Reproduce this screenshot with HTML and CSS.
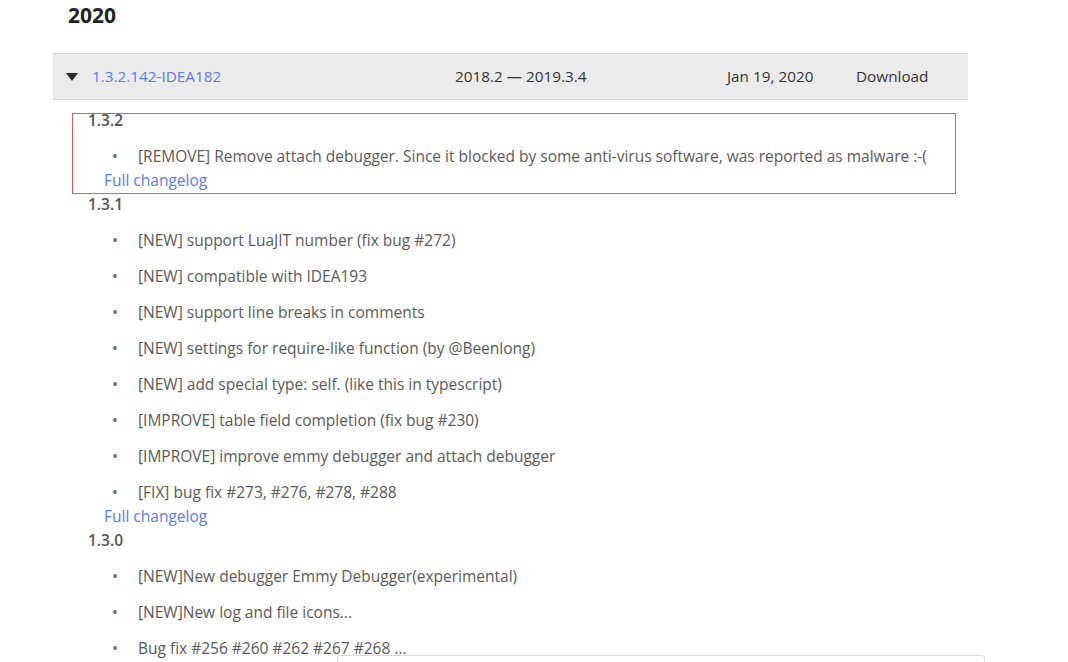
FILE: index.html
```html
<!DOCTYPE html>
<html>
<head>
<meta charset="utf-8">
<link rel="stylesheet" href="styles.css">
</head>
<body>
<div class="page">
  <h2 class="year">2020</h2>
  <div class="bar">
    <span class="caret"></span>
    <a class="ver" href="#">1.3.2.142-IDEA182</a>
    <span class="range">2018.2 — 2019.3.4</span>
    <span class="date">Jan 19, 2020</span>
    <span class="dl">Download</span>
  </div>
  <div class="notes">
    <div class="section marked">
      <div class="vh">1.3.2</div>
      <ul class="items">
        <li>[REMOVE] Remove attach debugger. Since it blocked by some anti-virus software, was reported as malware :-(</li>
      </ul>
      <a class="full" href="#">Full changelog</a>
    </div>
    <div class="section">
      <div class="vh">1.3.1</div>
      <ul class="items">
        <li>[NEW] support LuaJIT number (fix bug #272)</li>
        <li>[NEW] compatible with IDEA193</li>
        <li>[NEW] support line breaks in comments</li>
        <li>[NEW] settings for require-like function (by @Beenlong)</li>
        <li>[NEW] add special type: self. (like this in typescript)</li>
        <li>[IMPROVE] table field completion (fix bug #230)</li>
        <li>[IMPROVE] improve emmy debugger and attach debugger</li>
        <li>[FIX] bug fix #273, #276, #278, #288</li>
      </ul>
      <a class="full" href="#">Full changelog</a>
    </div>
    <div class="section">
      <div class="vh">1.3.0</div>
      <ul class="items">
        <li>[NEW]New debugger Emmy Debugger(experimental)</li>
        <li>[NEW]New log and file icons...</li>
        <li>Bug fix #256 #260 #262 #267 #268 ...</li>
      </ul>
    </div>
  </div>
</div>
<div class="popup"></div>
</body>
</html>
```
FILE: styles.css
```css
html, body {
  margin: 0;
  padding: 0;
  background: #fff;
  overflow: hidden;
}
body {
  width: 1068px;
  height: 662px;
  position: relative;
  font-family: "Open Sans", "Noto Sans", sans-serif;
  font-size: 15.5px;
  color: #5a5a5a;
}
.page {
  padding-left: 53px;
  width: 915px;
}
.year {
  margin: 0 0 22px 15px;
  font-size: 21px;
  line-height: 31px;
  font-weight: 700;
  color: #222;
}
.bar {
  display: grid;
  grid-template-columns: 26px 363px 272px 129px 1fr;
  align-items: center;
  height: 43px;
  padding: 0 0 2px 13px;
  background: #ebebeb;
  border-top: 1px solid #d6d6d6;
  border-bottom: 1px solid #d6d6d6;
  color: #333;
  font-size: 15.3px;
}
.caret {
  width: 0;
  height: 0;
  border-left: 6px solid transparent;
  border-right: 6px solid transparent;
  border-top: 8px solid #2a2a2a;
  margin-top: 2px;
}
.ver {
  color: #5b7bf0;
  text-decoration: none;
}
.notes {
  padding: 8px 0 0 35px;
}
.section {
  position: relative;
}
.marked::after {
  content: "";
  position: absolute;
  left: -16px;
  top: 5px;
  width: 882px;
  height: 79px;
  border: 1px solid #e85a5a;
  pointer-events: none;
}
.vh {
  font-weight: 600;
  line-height: 24px;
  color: #555;
}
.items {
  list-style: none;
  margin: 0 0 0 24px;
  padding: 0;
}
.items li {
  line-height: 24px;
  margin-top: 12px;
}
.items li::before {
  content: "•";
  display: inline-block;
  width: 26px;
  color: #666;
}
.full {
  display: block;
  margin-left: 16px;
  line-height: 24px;
  color: #5b7bf0;
  text-decoration: none;
}
.popup {
  position: absolute;
  left: 337px;
  top: 655px;
  width: 646px;
  height: 20px;
  border: 1px solid #d8d8d8;
  border-radius: 3px;
  background: #fff;
}
```
